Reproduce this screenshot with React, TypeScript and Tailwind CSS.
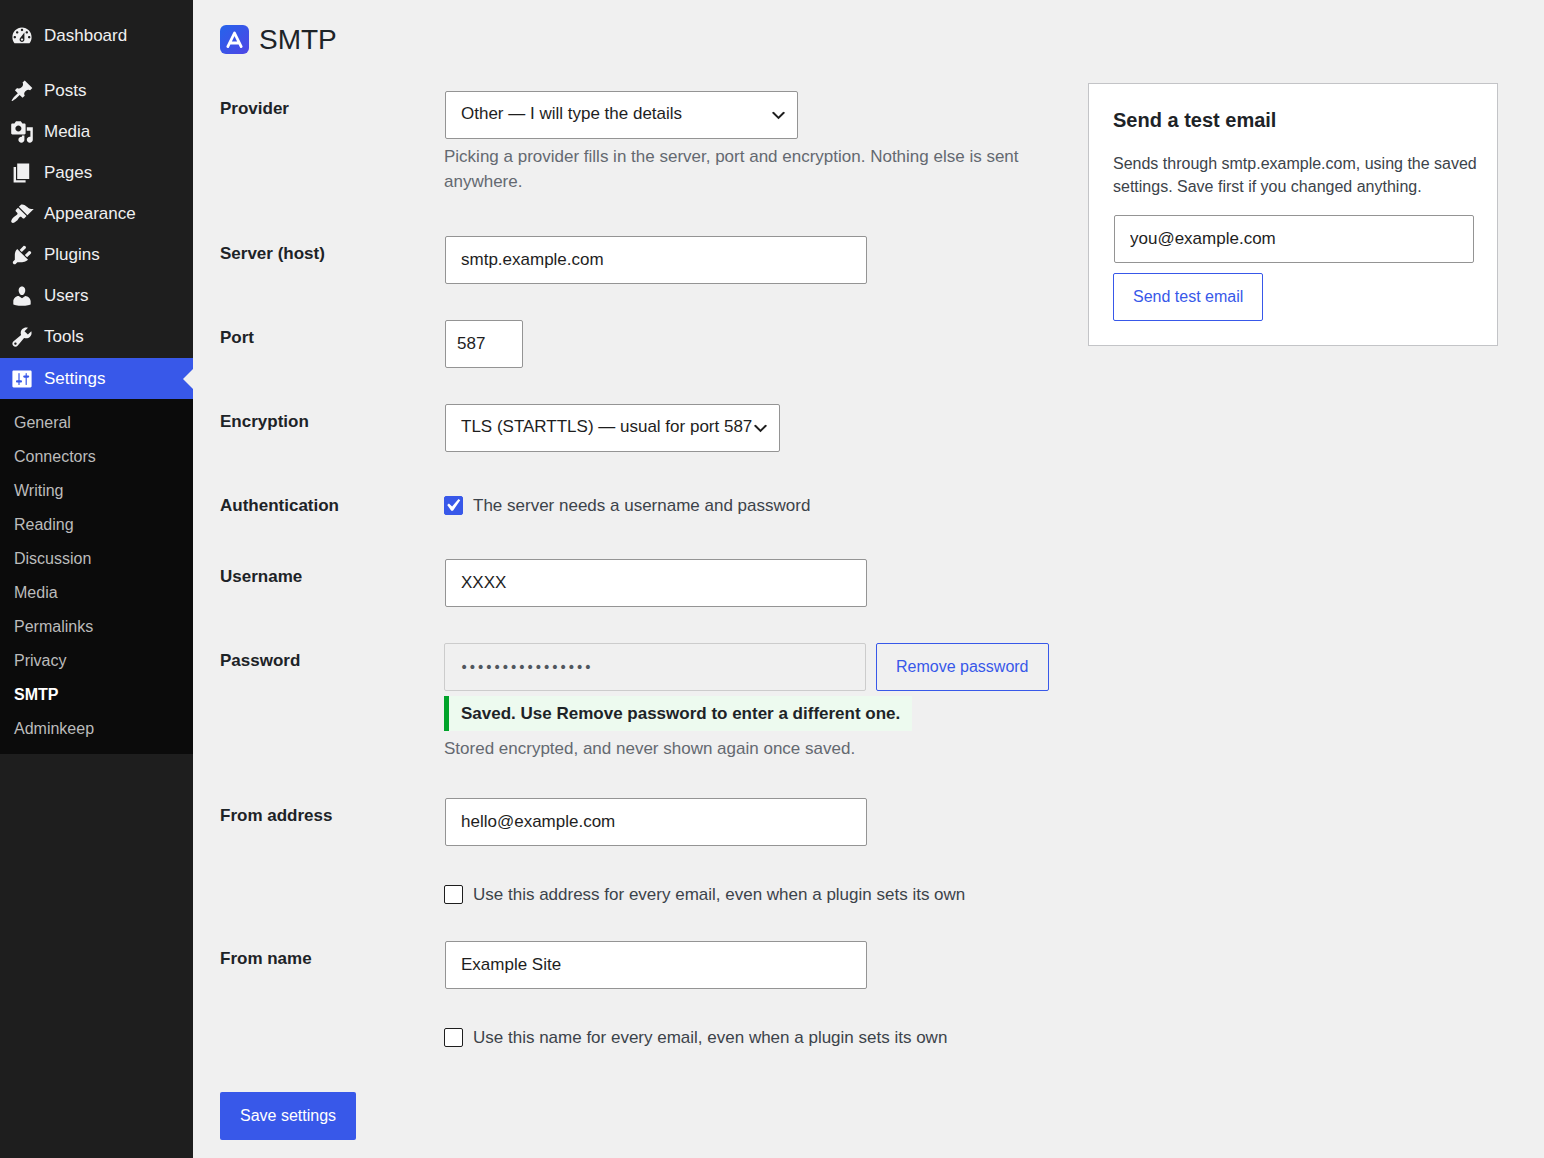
import { useState } from 'react';
import type { ReactNode } from 'react';
import clsx from 'clsx';

interface MenuItem {
  label: string;
  icon: string;
  active?: boolean;
}

const dashboardItem: MenuItem = {
  label: 'Dashboard',
  icon: 'M3.76 16h12.48c1.1-1.37 1.76-3.11 1.76-5 0-4.42-3.58-8-8-8s-8 3.58-8 8c0 1.89.66 3.63 1.76 5zM10 4c.55 0 1 .45 1 1s-.45 1-1 1-1-.45-1-1 .45-1 1-1zM6 6c.55 0 1 .45 1 1s-.45 1-1 1-1-.45-1-1 .45-1 1-1zm8 0c.55 0 1 .45 1 1s-.45 1-1 1-1-.45-1-1 .45-1 1-1zm-5.37 5.55L12 7v6c0 1.1-.9 2-2 2s-2-.9-2-2c0-.57.24-1.08.63-1.45zM4 10c.55 0 1 .45 1 1s-.45 1-1 1-1-.45-1-1 .45-1 1-1zm12 0c.55 0 1 .45 1 1s-.45 1-1 1-1-.45-1-1 .45-1 1-1zm-5 3c0-.55-.45-1-1-1s-1 .45-1 1 .45 1 1 1 1-.45 1-1z',
};

const menuItems: MenuItem[] = [
  {
    label: 'Posts',
    icon: 'M10.44 3.02l1.82-1.82 6.36 6.35-1.83 1.82c-1.05-.68-2.48-.57-3.41.36l-.75.75c-.92.93-1.04 2.35-.35 3.41l-1.83 1.82-2.41-2.41-2.8 2.79c-.42.42-3.38 2.71-3.8 2.29s1.86-3.39 2.28-3.81l2.79-2.79L4.1 9.36l1.83-1.82c1.05.69 2.48.57 3.4-.36l.75-.75c.93-.92 1.05-2.35.36-3.41z',
  },
  {
    label: 'Media',
    icon: 'M13 11V4c0-.55-.45-1-1-1h-1.67L9 1H5L3.67 3H2c-.55 0-1 .45-1 1v7c0 .55.45 1 1 1h10c.55 0 1-.45 1-1zM7 4.5c1.38 0 2.5 1.12 2.5 2.5S8.38 9.5 7 9.5 4.5 8.38 4.5 7 5.62 4.5 7 4.5zM14 6h5v10.5c0 1.38-1.12 2.5-2.5 2.5S14 17.88 14 16.5s1.12-2.5 2.5-2.5c.17 0 .34.02.5.05V9h-3V6zm-4 8.05V13h2v3.5c0 1.38-1.12 2.5-2.5 2.5S7 17.88 7 16.5 8.12 14 9.5 14c.17 0 .34.02.5.05z',
  },
  { label: 'Pages', icon: 'M6 15V2h10v13H6zm-1 1h8v2H3V5h2v11z' },
  {
    label: 'Appearance',
    icon: 'M14.48 11.06L7.41 3.99l1.5-1.5c.5-.56 2.3-.47 3.51.32 1.21.8 1.43 1.28 2.91 2.1 1.18.64 2.45 1.26 4.45.85zm-.71.71L6.7 4.7 4.93 6.47c-.39.39-.39 1.02 0 1.41l1.06 1.06c.39.39.39 1.03 0 1.42-.6.6-1.43 1.11-2.21 1.69-.35.26-.7.53-1.01.84C1.43 14.23.4 16.08 1.4 17.07c.99 1 2.84-.03 4.18-1.36.31-.31.58-.66.85-1.02.57-.78 1.08-1.61 1.69-2.21.39-.39 1.02-.39 1.41 0l1.06 1.06c.39.39 1.02.39 1.41 0z',
  },
  {
    label: 'Plugins',
    icon: 'M13.11 4.36L9.87 7.6 8 5.73l3.24-3.24c.35-.34 1.05-.2 1.56.32.52.51.66 1.21.31 1.55zm-8 1.77l.91-1.12 9.01 9.01-1.19.84c-.71.71-2.63 1.16-3.82 1.16H6.14L4.9 17.26c-.59.59-1.54.59-2.12 0-.59-.58-.59-1.53 0-2.12l1.24-1.24v-3.88c0-1.13.4-3.19 1.09-3.89zm7.26 3.97l3.24-3.24c.34-.35 1.04-.21 1.55.31.52.51.66 1.21.31 1.55l-3.24 3.25z',
  },
  {
    label: 'Users',
    icon: 'M10 9.25c-2.27 0-2.73-3.44-2.73-3.44C7 4.02 7.82 2 9.97 2c2.16 0 2.98 2.02 2.71 3.81 0 0-.41 3.44-2.68 3.44zm0 2.57L12.72 10c2.39 0 4.52 2.33 4.52 4.53v2.49s-3.65 1.13-7.24 1.13c-3.65 0-7.24-1.13-7.24-1.13v-2.49c0-2.25 1.94-4.48 4.47-4.48z',
  },
  {
    label: 'Tools',
    icon: 'M16.68 9.77c-1.34 1.34-3.3 1.67-4.95.99l-5.41 6.52c-.99.99-2.59.99-3.58 0s-.99-2.59 0-3.57l6.52-5.42c-.68-1.65-.35-3.61.99-4.95 1.28-1.28 3.12-1.62 4.72-1.06l-2.89 2.89 2.82 2.82 2.86-2.87c.53 1.58.18 3.39-1.08 4.65zM3.81 16.21c.4.39 1.04.39 1.43 0 .4-.4.4-1.04 0-1.43-.39-.4-1.03-.4-1.43 0-.39.39-.39 1.03 0 1.43z',
  },
  {
    label: 'Settings',
    active: true,
    icon: 'M18 16V4c0-.55-.45-1-1-1H3c-.55 0-1 .45-1 1v12c0 .55.45 1 1 1h14c.55 0 1-.45 1-1zM8 11h1c.55 0 1 .45 1 1s-.45 1-1 1H8v1.5c0 .28-.22.5-.5.5s-.5-.22-.5-.5V13H6c-.55 0-1-.45-1-1s.45-1 1-1h1V5.5c0-.28.22-.5.5-.5s.5.22.5.5V11zm5-2h-1c-.55 0-1-.45-1-1s.45-1 1-1h1V5.5c0-.28.22-.5.5-.5s.5.22.5.5V7h1c.55 0 1 .45 1 1s-.45 1-1 1h-1v5.5c0 .28-.22.5-.5.5s-.5-.22-.5-.5V9z',
  },
];

const submenuItems = [
  'General',
  'Connectors',
  'Writing',
  'Reading',
  'Discussion',
  'Media',
  'Permalinks',
  'Privacy',
  'SMTP',
  'Adminkeep',
];

const fieldClass =
  'block h-12 max-w-full rounded-xs border border-[#949494] bg-white text-[17px] text-[#1e1e1e]';

const MenuLink = ({ label, icon, active }: MenuItem) => (
  <a
    href="#"
    className={clsx(
      'relative flex h-[41px] items-center gap-[10px] pl-[10px] text-[17px]',
      active ? 'mt-px bg-[#3858e9] text-white' : 'text-[#f0f0f1]'
    )}
  >
    <svg viewBox="0 0 20 20" className="size-6 fill-current" aria-hidden="true">
      <path d={icon} fillRule="evenodd" />
    </svg>
    {label}
    {active && (
      <span className="absolute top-[11px] right-0 border-y-[10px] border-r-[10px] border-y-transparent border-r-[#f0f0f0]" />
    )}
  </a>
);

const Sidebar = () => (
  <nav className="w-[193px] shrink-0 bg-[#1e1e1e] pt-[15px]">
    <MenuLink {...dashboardItem} />
    <div className="mt-[14px]">
      {menuItems.map((item) => (
        <MenuLink key={item.label} {...item} />
      ))}
    </div>
    <ul className="bg-[#0b0b0b] pt-[7px] pb-2">
      {submenuItems.map((label) => (
        <li key={label}>
          <a
            href="#"
            className={clsx(
              'flex h-[34px] items-center pl-[14px] text-base',
              label === 'SMTP' ? 'font-bold text-white' : 'text-[#bcbcbc]'
            )}
          >
            {label}
          </a>
        </li>
      ))}
    </ul>
  </nav>
);

interface RowProps {
  label: string;
  htmlFor?: string;
  className?: string;
  children: ReactNode;
}

const Row = ({ label, htmlFor, className, children }: RowProps) => (
  <div className={clsx('flex', className ?? 'pb-[18px]')}>
    <div className="w-56 shrink-0 pt-[25px] text-[17px] leading-[22px] font-bold text-[#1d2327]">
      {htmlFor ? <label htmlFor={htmlFor}>{label}</label> : label}
    </div>
    <div className="min-w-0 flex-1 pt-[18px]">{children}</div>
  </div>
);

interface SelectProps {
  id: string;
  className: string;
  option: string;
}

const Select = ({ id, className, option }: SelectProps) => (
  <div className={clsx('relative ml-px max-w-full', className)}>
    <select id={id} className={clsx(fieldClass, 'w-full appearance-none pr-6 pb-[2px] pl-[15px]')}>
      <option>{option}</option>
    </select>
    <svg
      viewBox="0 0 20 20"
      className="pointer-events-none absolute top-[15px] right-[10px] size-[19px] fill-[#1e1e1e]"
      aria-hidden="true"
    >
      <path d="M5 6l5 5 5-5 2 1-7 7-7-7 2-1z" />
    </svg>
  </div>
);

interface CheckboxProps {
  id: string;
  label: string;
  defaultChecked?: boolean;
}

const Checkbox = ({ id, label, defaultChecked = false }: CheckboxProps) => {
  const [checked, setChecked] = useState(defaultChecked);

  return (
    <label htmlFor={id} className="flex items-center gap-[10px] text-[17px] leading-[25px] text-[#3c434a]">
      <span className="relative flex size-[19px] shrink-0">
        <input
          id={id}
          type="checkbox"
          checked={checked}
          onChange={(e) => setChecked(e.target.checked)}
          className="size-full appearance-none rounded-xs border border-[#1e1e1e] bg-white checked:border-[#3858e9] checked:bg-[#3858e9]"
        />
        {checked && (
          <svg
            viewBox="0 0 20 20"
            className="pointer-events-none absolute -top-[3px] -left-[4px] size-[25px] fill-white"
            aria-hidden="true"
          >
            <path d="M14.83 4.89l1.34.94-5.81 8.38H9.02L5.78 9.67l1.34-1.25 2.57 2.4z" />
          </svg>
        )}
      </span>
      {label}
    </label>
  );
};

const Description = ({ children }: { children: ReactNode }) => (
  <p className="mt-[5px] text-[17px] leading-[25px] text-[#646970]">{children}</p>
);

const OutlineButton = ({ children }: { children: ReactNode }) => (
  <button
    type="button"
    className="h-12 shrink-0 rounded-xs border border-[#3858e9] px-[19px] text-base text-[#3858e9]"
  >
    {children}
  </button>
);

const Logo = () => (
  <svg viewBox="0 0 29 29" className="size-[29px]" aria-hidden="true">
    <defs>
      <linearGradient id="logo-fill" x1="0" y1="0" x2="1" y2="1">
        <stop offset="0" stopColor="#2563eb" />
        <stop offset="1" stopColor="#4f46e5" />
      </linearGradient>
    </defs>
    <rect width="29" height="29" rx="6" fill="url(#logo-fill)" />
    <path
      d="M7.8 21.6L14.5 8l6.7 13.6M10.4 18h8.2"
      fill="none"
      stroke="#fff"
      strokeWidth="2.8"
      strokeLinecap="round"
      strokeLinejoin="round"
    />
  </svg>
);

const TestEmailCard = () => (
  <section className="mt-[10px] w-[410px] shrink-0 border border-[#c3c4c7] bg-white p-6">
    <h2 className="text-xl leading-6 font-bold text-[#1d2327]">Send a test email</h2>
    <p className="mt-5 -mr-2 text-base leading-[23px] text-[#3c434a]">
      Sends through smtp.example.com, using the saved settings. Save first if you changed anything.
    </p>
    <input
      type="email"
      aria-label="Test email address"
      defaultValue="you@example.com"
      className={clsx(fieldClass, 'mt-[17px] mb-[10px] ml-px w-full px-[15px]')}
    />
    <OutlineButton>Send test email</OutlineButton>
  </section>
);

function App() {
  return (
    <div className="flex min-h-screen bg-[#f0f0f0] font-['Liberation_Sans',Arial,sans-serif]">
      <Sidebar />

      <main className="min-w-0 flex-1 pt-6 pr-[46px] pb-[18px] pl-[27px]">
        <h1 className="flex h-[31px] items-center gap-[10px] text-[28px] text-[#1d2327]">
          <Logo />
          SMTP
        </h1>

        <div className="mt-[18px] flex items-start gap-6">
          <form className="min-w-0 flex-1">
            <Row label="Provider" htmlFor="provider" className="pb-6">
              <Select id="provider" className="w-[353px]" option="Other — I will type the details" />
              <Description>
                Picking a provider fills in the server, port and encryption. Nothing else is sent anywhere.
              </Description>
            </Row>
            <Row label="Server (host)" htmlFor="host">
              <input
                id="host"
                type="text"
                defaultValue="smtp.example.com"
                className={clsx(fieldClass, 'ml-px w-[422px] px-[15px]')}
              />
            </Row>
            <Row label="Port" htmlFor="port">
              <input
                id="port"
                type="text"
                inputMode="numeric"
                defaultValue="587"
                className={clsx(fieldClass, 'ml-px w-[78px] pl-[11px]')}
              />
            </Row>
            <Row label="Encryption" htmlFor="encryption">
              <Select
                id="encryption"
                className="w-[335px]"
                option="TLS (STARTTLS) — usual for port 587"
              />
            </Row>
            <Row label="Authentication" className="pb-[23px]">
              <div className="pt-[5px]">
                <Checkbox id="auth" label="The server needs a username and password" defaultChecked />
              </div>
            </Row>
            <Row label="Username" htmlFor="username">
              <input
                id="username"
                type="text"
                defaultValue="XXXX"
                className={clsx(fieldClass, 'ml-px w-[422px] px-[15px]')}
              />
            </Row>
            <Row label="Password" htmlFor="password" className="pb-[19px]">
              <div className="flex gap-[10px]">
                <input
                  id="password"
                  type="password"
                  readOnly
                  value="xxxxxxxxxxxxxxxx"
                  className="h-12 w-[422px] min-w-0 rounded-xs border border-[#cccccc] px-[15px] font-['DejaVu_Sans',sans-serif] text-sm text-[#50575e]"
                />
                <OutlineButton>Remove password</OutlineButton>
              </div>
              <p className="mt-[5px] w-fit border-l-[5px] border-[#00a32a] bg-[#edfaef] px-3 py-[5px] text-[17px] leading-[25px] font-bold text-[#1d2327]">
                Saved. Use Remove password to enter a different one.
              </p>
              <Description>Stored encrypted, and never shown again once saved.</Description>
            </Row>
            <Row label="From address" htmlFor="from-address" className="pb-4">
              <input
                id="from-address"
                type="email"
                defaultValue="hello@example.com"
                className={clsx(fieldClass, 'mb-9 ml-px w-[422px] px-[15px]')}
              />
              <Checkbox
                id="force-address"
                label="Use this address for every email, even when a plugin sets its own"
              />
            </Row>
            <Row label="From name" htmlFor="from-name" className="pb-[42px]">
              <input
                id="from-name"
                type="text"
                defaultValue="Example Site"
                className={clsx(fieldClass, 'mb-9 ml-px w-[422px] px-[15px]')}
              />
              <Checkbox
                id="force-name"
                label="Use this name for every email, even when a plugin sets its own"
              />
            </Row>
            <button type="button" className="h-12 rounded-xs bg-[#3858e9] px-5 text-base text-white">
              Save settings
            </button>
          </form>

          <TestEmailCard />
        </div>
      </main>
    </div>
  );
}

export default App;
